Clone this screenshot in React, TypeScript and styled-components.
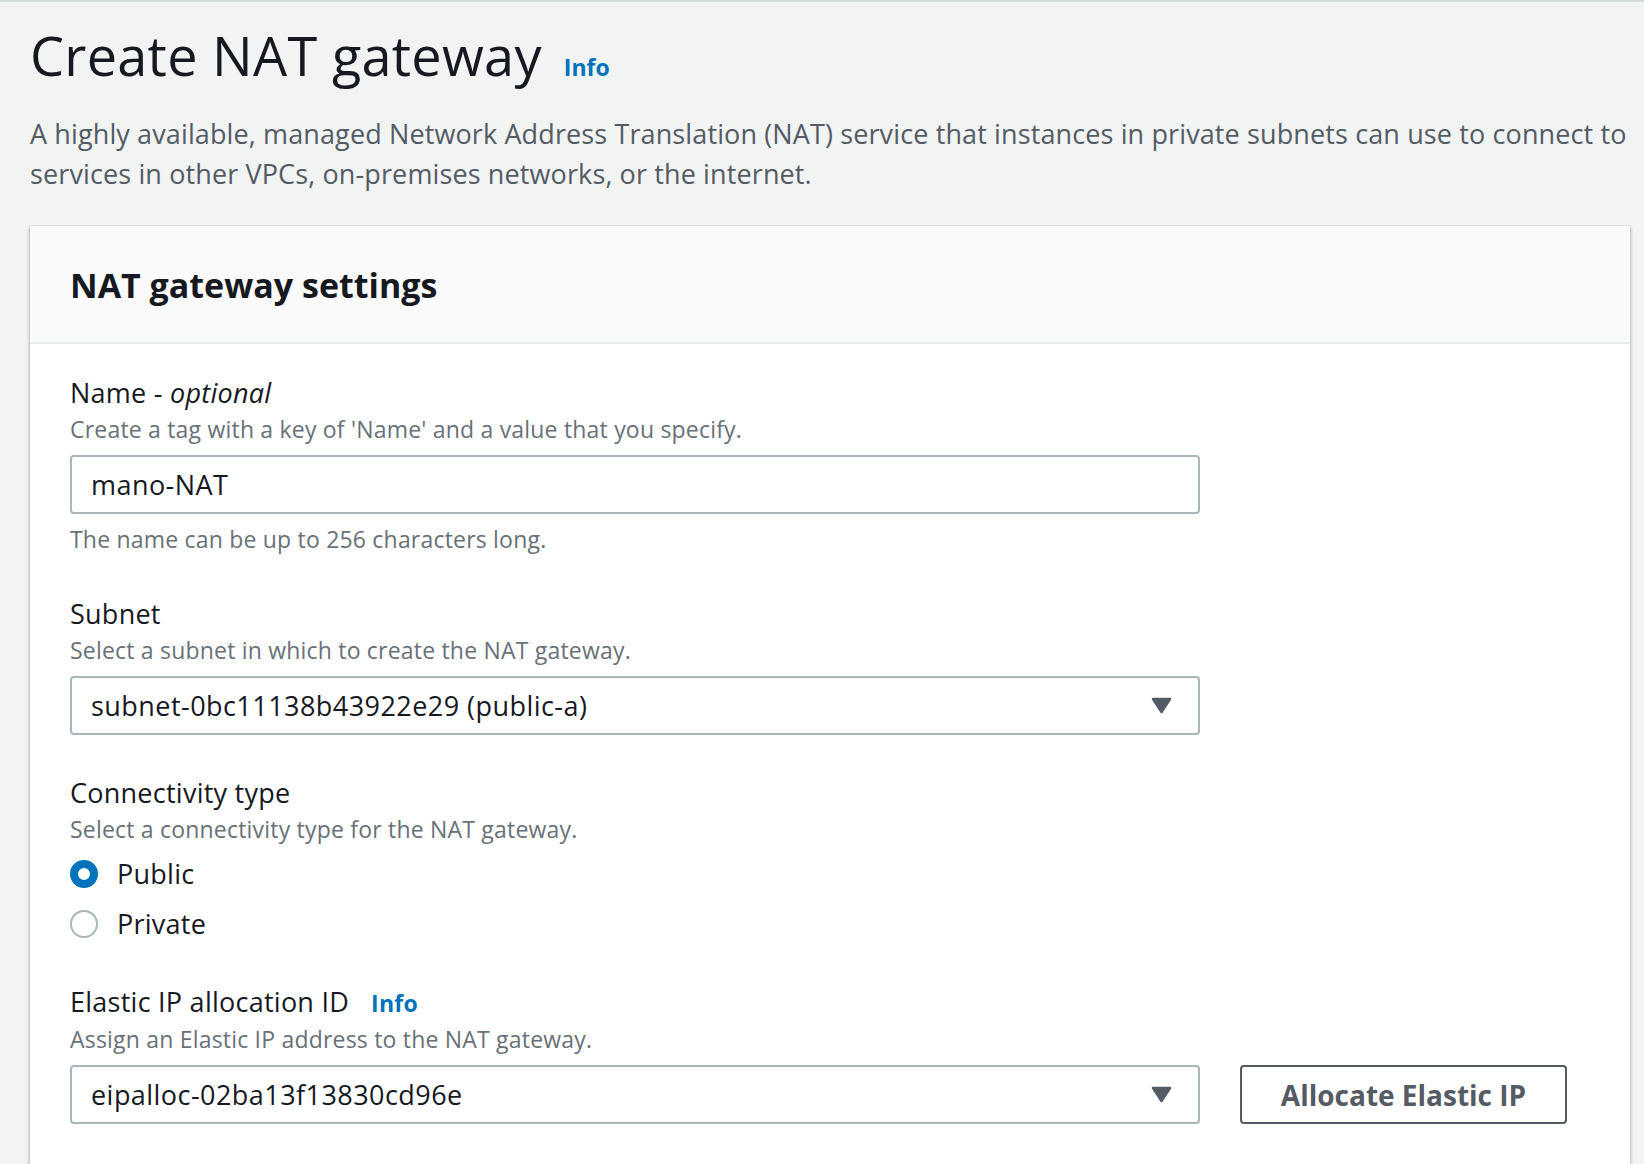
import React from "react";
import styled, { createGlobalStyle } from "styled-components";

const GlobalStyle = createGlobalStyle`
  html, body {
    margin: 0;
    padding: 0;
    background: #f2f3f3;
    overflow: hidden;
  }
  body {
    font-family: "Open Sans", "Noto Sans", Arial, sans-serif;
    color: #16191f;
  }
  * { box-sizing: border-box; }
`;

const Page = styled.div`
  height: 100vh;
  display: flex;
  flex-direction: column;
  border-top: 2px solid #d5dbdb;
  padding: 19px 14px 0 30px;
`;

const PageHeader = styled.header`
  display: flex;
  flex-direction: column;
`;

const TitleRow = styled.div`
  display: flex;
  align-items: baseline;
  gap: 22px;
`;

const Title = styled.h1`
  margin: 0;
  font-size: 54px;
  line-height: 68px;
  font-weight: 400;
  letter-spacing: 0.3px;
  color: #16191f;
`;

const InfoLink = styled.a`
  font-size: 23px;
  font-weight: 700;
  color: #0073bb;
  text-decoration: none;
  cursor: pointer;
`;

const Lead = styled.p`
  margin: 25px 0 0;
  font-size: 27px;
  line-height: 40px;
  letter-spacing: 0.12px;
  color: #545b64;
`;

const Card = styled.section`
  flex: 1;
  margin-top: 32px;
  background: #ffffff;
  box-shadow: 0 0 0 1px rgba(0, 28, 36, 0.07), -2px 2px 2px rgba(0, 28, 36, 0.12),
    2px 2px 2px rgba(0, 28, 36, 0.12);
  display: flex;
  flex-direction: column;
`;

const CardHeader = styled.div`
  background: #fafafa;
  padding: 37px 40px 35px;
  border-bottom: 2px solid #eaeded;
`;

const CardTitle = styled.h2`
  margin: 0;
  font-size: 34px;
  line-height: 44px;
  font-weight: 700;
  color: #16191f;
`;

const CardBody = styled.div`
  padding: 30px 40px;
  display: flex;
  flex-direction: column;
  gap: 39px;
`;

const Field = styled.div`
  display: flex;
  flex-direction: column;
`;

const Label = styled.label`
  display: flex;
  align-items: baseline;
  gap: 22px;
  font-size: 27px;
  line-height: 38px;
  letter-spacing: 0.25px;
  color: #16191f;

  em {
    font-style: italic;
  }
`;

const Description = styled.div`
  font-size: 23px;
  line-height: 34px;
  letter-spacing: 0.2px;
  color: #687078;
`;

const Constraint = styled(Description)`
  margin-top: 8px;
`;

const ControlRow = styled.div`
  margin-top: 9px;
  display: flex;
  align-items: center;
  gap: 40px;
`;

const InputBox = styled.div`
  width: 1130px;
  height: 59px;
  border: 2px solid #aab7b8;
  border-radius: 4px;
  background: #ffffff;
  display: flex;
  align-items: center;
  justify-content: space-between;
  padding: 0 26px 0 19px;
  font-size: 27px;
  line-height: 40px;
  letter-spacing: 0.45px;
  color: #16191f;
`;

const Caret = styled.svg`
  width: 21px;
  height: 17px;
  flex: none;
`;

const Button = styled.button`
  width: 327px;
  height: 59px;
  border: 2px solid #545b64;
  border-radius: 4px;
  background: #ffffff;
  font-family: "Open Sans", "Noto Sans", Arial, sans-serif;
  font-size: 28px;
  font-weight: 700;
  color: #545b64;
  padding: 0;
  cursor: pointer;
`;

const RadioGroup = styled.div`
  margin-top: 8px;
  display: flex;
  flex-direction: column;
  gap: 10px;
`;

const RadioRow = styled.div`
  height: 40px;
  display: flex;
  align-items: center;
  gap: 19px;
  font-size: 27px;
  line-height: 40px;
  letter-spacing: 0.25px;
  color: #16191f;
`;

const RadioDot = styled.span<{ $checked?: boolean }>`
  width: 28px;
  height: 28px;
  border-radius: 50%;
  flex: none;
  background: #ffffff;
  border: ${(p) => (p.$checked ? "8.5px solid #0073bb" : "2px solid #aab7b8")};
`;

const SelectCaret = () => (
  <Caret viewBox="0 0 21 17">
    <path
      d="M2 2 H19 L10.5 15 Z"
      fill="#545b64"
      stroke="#545b64"
      strokeWidth="2.5"
      strokeLinejoin="round"
    />
  </Caret>
);

export default function App() {
  return (
    <>
      <GlobalStyle />
      <Page>
        <PageHeader>
          <TitleRow>
            <Title>Create NAT gateway</Title>
            <InfoLink>Info</InfoLink>
          </TitleRow>
          <Lead>
            A highly available, managed Network Address Translation (NAT) service that instances in
            private subnets can use to connect to services in other VPCs, on-premises networks, or the
            internet.
          </Lead>
        </PageHeader>

        <Card>
          <CardHeader>
            <CardTitle>NAT gateway settings</CardTitle>
          </CardHeader>
          <CardBody>
            <Field>
              <Label>
                <span>
                  Name - <em>optional</em>
                </span>
              </Label>
              <Description>Create a tag with a key of 'Name' and a value that you specify.</Description>
              <ControlRow>
                <InputBox>mano-NAT</InputBox>
              </ControlRow>
              <Constraint>The name can be up to 256 characters long.</Constraint>
            </Field>

            <Field>
              <Label>Subnet</Label>
              <Description>Select a subnet in which to create the NAT gateway.</Description>
              <ControlRow>
                <InputBox>
                  <span>subnet-0bc11138b43922e29 (public-a)</span>
                  <SelectCaret />
                </InputBox>
              </ControlRow>
            </Field>

            <Field>
              <Label>Connectivity type</Label>
              <Description>Select a connectivity type for the NAT gateway.</Description>
              <RadioGroup>
                <RadioRow>
                  <RadioDot $checked />
                  <span>Public</span>
                </RadioRow>
                <RadioRow>
                  <RadioDot />
                  <span>Private</span>
                </RadioRow>
              </RadioGroup>
            </Field>

            <Field>
              <Label>
                <span>Elastic IP allocation ID</span>
                <InfoLink>Info</InfoLink>
              </Label>
              <Description>Assign an Elastic IP address to the NAT gateway.</Description>
              <ControlRow>
                <InputBox>
                  <span>eipalloc-02ba13f13830cd96e</span>
                  <SelectCaret />
                </InputBox>
                <Button>Allocate Elastic IP</Button>
              </ControlRow>
            </Field>
          </CardBody>
        </Card>
      </Page>
    </>
  );
}
